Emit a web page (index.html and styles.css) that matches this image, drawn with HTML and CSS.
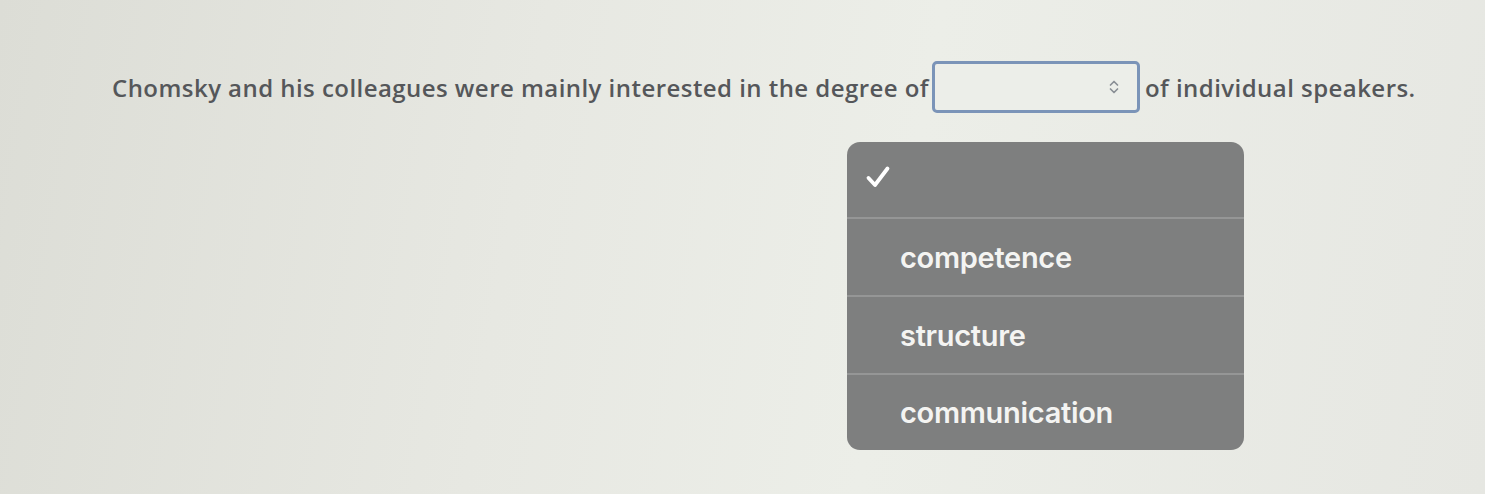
FILE: index.html
```html
<!DOCTYPE html>
<html>
<head>
<meta charset="utf-8">
<link rel="stylesheet" href="styles.css">
</head>
<body>
<div class="page">
  <div class="sentence">
    <span class="txt">Chomsky and his colleagues were mainly interested in the degree of</span>
    <span class="select">
      <svg class="chev" width="12" height="16" viewBox="0 0 12 16"><path d="M2.5 6 L6 2.5 L9.5 6 M2.5 10 L6 13.5 L9.5 10" fill="none" stroke="#8a8f95" stroke-width="1.7" stroke-linecap="round" stroke-linejoin="round"/></svg>
    </span>
    <span class="txt">of individual speakers.</span>
  </div>
  <div class="menu">
    <div class="item first">
      <svg class="check" width="26" height="24" viewBox="0 0 26 24"><path d="M3.5 13 L10 20 L22.5 3.5" fill="none" stroke="#ffffff" stroke-width="3.8" stroke-linecap="round" stroke-linejoin="round"/></svg>
    </div>
    <div class="item">competence</div>
    <div class="item">structure</div>
    <div class="item last">communication</div>
  </div>
</div>
</body>
</html>
```
FILE: styles.css
```css
html, body {
  margin: 0;
  padding: 0;
}
body {
  width: 1485px;
  height: 494px;
  overflow: hidden;
  background: linear-gradient(100deg, #dcddd6 0%, #e7e8e2 35%, #eceee8 60%, #e6e7e2 100%);
  font-family: "Open Sans", "Liberation Sans", sans-serif;
}
.page {
  position: relative;
  width: 1485px;
  height: 494px;
}
.sentence {
  display: flex;
  align-items: center;
  padding: 61px 0 0 112px;
  color: #55575a;
  font-size: 24px;
  font-weight: 600;
  letter-spacing: 0.45px;
}
.txt {
  white-space: nowrap;
}
.select {
  box-sizing: border-box;
  width: 208px;
  height: 52px;
  margin: 0 5px 0 3px;
  border: 3px solid #7b94b8;
  border-radius: 5px;
  background: #eceee9;
  display: flex;
  align-items: center;
  justify-content: flex-end;
  padding-right: 17px;
}
.chev {
  display: block;
}
.menu {
  position: absolute;
  left: 847px;
  top: 142px;
  width: 397px;
  height: 308px;
  background: #7e7f7f;
  border-radius: 13px;
  display: flex;
  flex-direction: column;
  font-family: "Inter", "Roboto", sans-serif;
  font-weight: 600;
  font-size: 29px;
  color: #f4f4f2;
  overflow: hidden;
}
.item {
  flex: 0 0 76px;
  display: flex;
  align-items: center;
  padding-left: 53px;
  border-bottom: 2px solid #959696;
  letter-spacing: -0.3px;
}
.item.first {
  padding-left: 18px;
  flex-basis: 75px;
}
.item.last {
  border-bottom: none;
  flex: 1 1 auto;
}
.check {
  display: block;
  margin-top: -6px;
}
```
